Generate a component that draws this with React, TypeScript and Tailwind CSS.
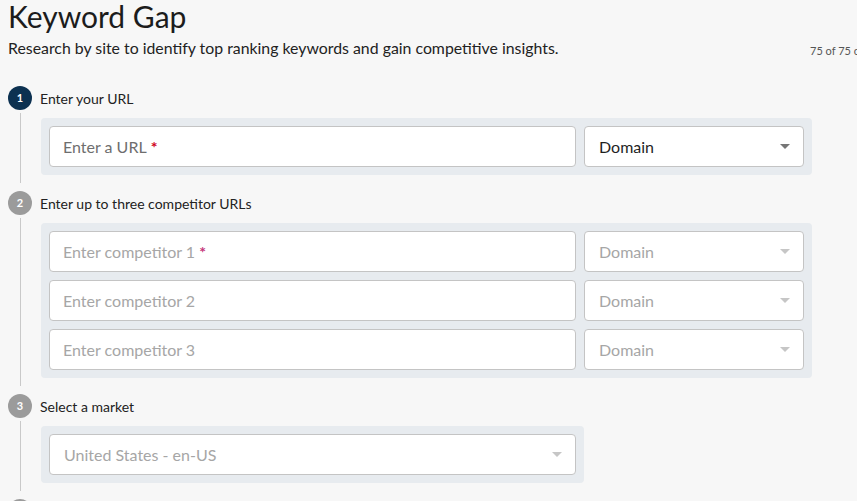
import React from 'react'

type StepProps = {
  n: number
  label: string
  active?: boolean
  children?: React.ReactNode
}

const Caret = ({ color }: { color: string }) => (
  <svg width="10" height="5" viewBox="0 0 10 5" className="shrink-0">
    <path d="M0 0 L10 0 L5 5 Z" fill={color} />
  </svg>
)

const Field = ({ text, muted, required }: { text: string; muted?: boolean; required?: boolean }) => (
  <div className="flex h-[41px] w-[527px] shrink-0 items-center rounded-[4px] border border-[#c4c4c4] bg-white pl-[13px] text-[16px]">
    <span className={muted ? 'text-[#a6a6a6]' : 'text-[#6e6e6e]'}>{text}</span>
    {required && (
      <span className={`ml-[4px] font-bold ${muted ? 'text-[#c4357a]' : 'text-[#d0021b]'}`}>*</span>
    )}
  </div>
)

const Select = ({ text, muted, wide }: { text: string; muted?: boolean; wide?: boolean }) => (
  <div
    className={`flex h-[41px] shrink-0 items-center justify-between rounded-[4px] border border-[#c4c4c4] bg-white pl-[14px] pr-[13px] text-[16px] ${
      wide ? 'w-[527px]' : 'w-[220px]'
    }`}
  >
    <span className={muted ? 'text-[#a6a6a6]' : 'text-[#1f1f1f]'}>{text}</span>
    <Caret color={muted ? '#c6c6c6' : '#767676'} />
  </div>
)

const Step = ({ n, label, active, children }: StepProps) => (
  <div>
    <div className="flex h-6 items-center gap-2">
      <div
        className={`flex h-6 w-6 shrink-0 items-center justify-center rounded-full text-[11px] font-bold text-white ${
          active ? 'bg-[#0c3151]' : 'bg-[#9b9b9b]'
        }`}
      >
        {n}
      </div>
      <span className="text-[14px] text-[#222]">{label}</span>
    </div>
    {children && (
      <div className="flex">
        <div className="flex w-[33px] shrink-0 pb-2 pt-[3px]">
          <div className="ml-[12px] w-px bg-[#c9c9c9]" />
        </div>
        <div className="mb-4 mt-2 flex flex-col gap-2 rounded-[4px] bg-[#e7ebef] p-2">{children}</div>
      </div>
    )}
  </div>
)

export default function App() {
  return (
    <div className="h-[501px] w-[857px] overflow-hidden bg-[#f7f7f7] pl-2 font-['Lato',sans-serif] text-[#222]">
      <h1 className="text-[30px] font-normal leading-8 text-[#1c1c1c]">Keyword Gap</h1>
      <div className="mt-[6px] flex items-start">
        <p className="w-[802px] shrink-0 text-[15.85px] leading-5">
          Research by site to identify top ranking keywords and gain competitive insights.
        </p>
        <span className="mt-[6px] whitespace-nowrap text-[11px] leading-[14px] text-[#555]">75 of 75 credits remaining</span>
      </div>

      <div className="mt-[28px]">
        <Step n={1} label="Enter your URL" active>
          <div className="flex gap-2">
            <Field text="Enter a URL" required />
            <Select text="Domain" />
          </div>
        </Step>
        <Step n={2} label="Enter up to three competitor URLs">
          {['Enter competitor 1', 'Enter competitor 2', 'Enter competitor 3'].map((t, i) => (
            <div key={t} className="flex gap-2">
              <Field text={t} muted required={i === 0} />
              <Select text="Domain" muted />
            </div>
          ))}
        </Step>
        <Step n={3} label="Select a market">
          <Select text="United States - en-US" muted wide />
        </Step>
        <Step n={4} label="Run analysis" />
      </div>
    </div>
  )
}
